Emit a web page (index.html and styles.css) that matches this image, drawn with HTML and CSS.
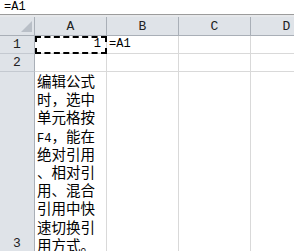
FILE: index.html
```html
<!DOCTYPE html>
<html>
    <head>
        <meta charset="utf-8">
        <title>Sheet</title>
        <link rel="stylesheet" href="styles.css">
    </head>
    <body>
        <div class="formula">=A1</div>
        <div class="sheet">
            <div class="corner"><span class="tri"></span></div>
            <div class="colhead">A</div>
            <div class="colhead">B</div>
            <div class="colhead">C</div>
            <div class="colhead">D</div>

            <div class="rowhead">1</div>
            <div class="cell num selected">1</div>
            <div class="cell">=A1</div>
            <div class="cell"></div>
            <div class="cell"></div>

            <div class="rowhead">2</div>
            <div class="cell"></div>
            <div class="cell"></div>
            <div class="cell"></div>
            <div class="cell"></div>

            <div class="rowhead bottom">3</div>
            <div class="cell note">编辑公式<br>时，选中<br>单元格按<br><span class="latin">F4</span>，能在<br>绝对引用<br>、相对引<br>用、混合<br>引用中快<br>速切换引<br>用方式。</div>
            <div class="cell"></div>
            <div class="cell"></div>
            <div class="cell"></div>
        </div>
    </body>
</html>
```

FILE: styles.css
```css
html, body{
    margin: 0;
    background: #ffffff;
    overflow: hidden;
}
body{
    font-family: "Liberation Mono", "Noto Sans CJK SC", monospace;
    font-size: 12px;
    color: #000000;
}
.formula{
    height: 14px;
    line-height: 14px;
    padding-left: 4px;
    border-bottom: 1px solid #9c9c9c;
}
.sheet{
    display: grid;
    grid-template-columns: 35px 72px 72px 72px 72px;
    grid-template-rows: 19px 18px 18px 181px;
    border-top: 2px solid #e6e8eb;
}
.corner, .colhead, .rowhead{
    background: #dfe3e8;
    color: #222222;
    box-sizing: border-box;
}
.corner{
    position: relative;
    border-right: 1px solid #a9afb7;
    border-bottom: 1px solid #a9afb7;
}
.tri{
    position: absolute;
    right: 2px;
    bottom: 3px;
    width: 0;
    height: 0;
    border-left: 11px solid transparent;
    border-bottom: 11px solid #b9bfc7;
}
.colhead{
    display: flex;
    align-items: flex-end;
    justify-content: center;
    padding-bottom: 1px;
    font-size: 13px;
    border-right: 1px solid #a9afb7;
    border-bottom: 1px solid #a9afb7;
}
.rowhead{
    display: flex;
    align-items: center;
    justify-content: center;
    font-size: 13px;
    border-right: 1px solid #a9afb7;
    border-bottom: 1px solid #c4c9d0;
}
.rowhead.bottom{
    align-items: flex-end;
    padding-bottom: 1px;
}
.cell{
    box-sizing: border-box;
    border-right: 1px solid #d9d9d9;
    border-bottom: 1px solid #d9d9d9;
    padding: 0 2px;
    line-height: 17px;
    white-space: nowrap;
}
.num{
    text-align: right;
    padding-right: 5px;
}
.selected{
    outline: 2px dashed #000000;
    outline-offset: -2px;
}
.note{
    font-family: "Noto Sans CJK SC", sans-serif;
    font-size: 14.5px;
    line-height: 18.2px;
}
.latin{
    font-family: "Liberation Mono", monospace;
    font-size: 12px;
    line-height: 1;
}
```
